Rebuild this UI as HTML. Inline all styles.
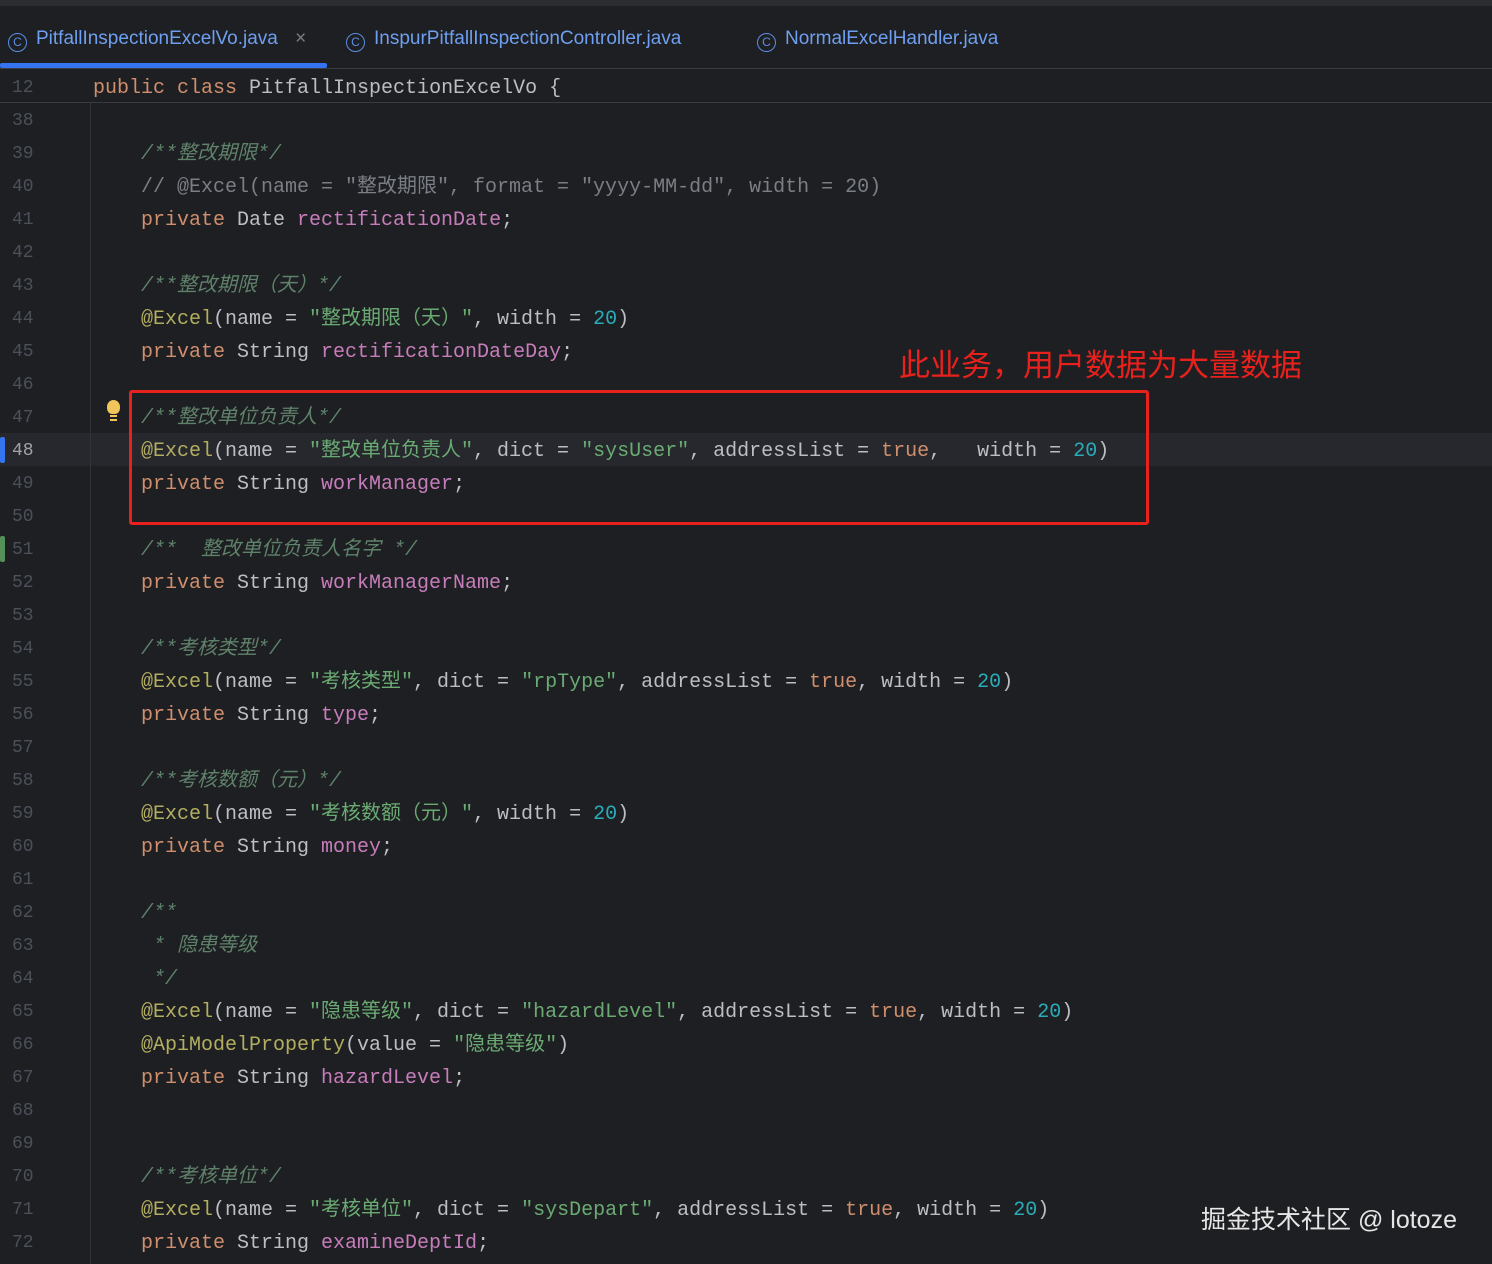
<!DOCTYPE html>
<html><head><meta charset="utf-8"><style>
html,body{margin:0;padding:0;width:1492px;height:1264px;overflow:hidden;background:#1e1f22;}
body{position:relative;font-family:"Liberation Mono","Noto Sans CJK SC",monospace;}
.top{position:absolute;left:0;top:0;width:1492px;height:6px;background:#2b2d30;}
.tabs{position:absolute;left:0;top:6px;width:1492px;height:62px;background:#1e1f22;border-bottom:1px solid #393b40;}
.tab{position:absolute;top:22px;font-family:"Liberation Sans","Noto Sans CJK SC",sans-serif;font-size:19px;color:#6e9ff0;white-space:nowrap;}
.ic{display:inline-block;width:17px;height:17px;border:1.5px solid #5b8ee6;border-radius:50%;font-size:12px;line-height:17px;text-align:center;color:#5b8ee6;vertical-align:-2px;margin-right:9px;}
.uline{position:absolute;left:0;top:63px;width:327px;height:5px;background:#3574f0;border-radius:2px;}
.sticky{position:absolute;left:0;top:69px;width:1492px;height:33px;border-bottom:1px solid #393b40;background:#1e1f22;}
.ln{position:absolute;left:12px;font-size:18px;color:#4b5059;height:33px;line-height:33px;transform:translateY(2px);}
.code{position:absolute;font-size:20px;color:#bcbec4;white-space:pre;height:33px;line-height:33px;transform:translateY(2px);}
.k{color:#cf8e6d}.s{color:#6aab73}.c{color:#5f826b;font-style:italic}.cm{color:#7a7e85}.f{color:#c77dbb}.n{color:#2aacb8}.a{color:#b3ae60}
.cur{position:absolute;left:0;top:433px;width:1492px;height:33px;background:#26282e;}
.gut{position:absolute;left:90px;top:103px;width:1px;height:1161px;background:#313338;}
.box{position:absolute;left:129px;top:390px;width:1014px;height:129px;border:3px solid #e8211d;border-radius:3px;}
.red{position:absolute;left:899px;top:340px;font-family:"Noto Sans CJK SC",sans-serif;font-size:31px;color:#e8211d;white-space:nowrap;}
.wm{position:absolute;left:1201px;top:1200px;font-family:"Liberation Sans","Noto Sans CJK SC",sans-serif;font-size:25px;color:#e6e6e6;white-space:nowrap;}
.mk{position:absolute;left:0;width:5px;height:26px;border-radius:2px;}
</style></head><body>
<div class="top"></div>
<div class="tabs">
<div class="tab" style="left:8px"><span class="ic">C</span>PitfallInspectionExcelVo.java <span style="color:#7a7e85;margin-left:12px">×</span></div>
<div class="tab" style="left:346px"><span class="ic">C</span>InspurPitfallInspectionController.java</div>
<div class="tab" style="left:757px"><span class="ic">C</span>NormalExcelHandler.java</div>
</div>
<div class="uline"></div>
<div class="cur"></div>
<div class="gut"></div>
<div class="sticky"></div>
<div class="ln" style="top:70px">12</div><div class="code" style="left:93px;top:70px"><span class="k">public class</span> PitfallInspectionExcelVo {</div>

<div class="mk" style="top:437px;background:#3574f0"></div>
<div class="mk" style="top:536px;background:#549159"></div>
<div style="position:absolute;left:107px;top:400px;width:13px;height:14px;background:#f2c55c;border-radius:50% 50% 40% 40%"></div>
<div style="position:absolute;left:110px;top:415px;width:7px;height:2px;background:#f2c55c"></div>
<div style="position:absolute;left:110px;top:419px;width:7px;height:2px;background:#f2c55c"></div>

<div class="ln" style="top:103px">38</div>
<div class="ln" style="top:136px">39</div><div class="code" style="left:141px;top:136px"><span class="c">/**整改期限*/</span></div>
<div class="ln" style="top:169px">40</div><div class="code cm" style="left:141px;top:169px">// @Excel(name = "整改期限", format = "yyyy-MM-dd", width = 20)</div>
<div class="ln" style="top:202px">41</div><div class="code" style="left:141px;top:202px"><span class="k">private</span> Date <span class="f">rectificationDate</span>;</div>
<div class="ln" style="top:235px">42</div>
<div class="ln" style="top:268px">43</div><div class="code" style="left:141px;top:268px"><span class="c">/**整改期限（天）*/</span></div>
<div class="ln" style="top:301px">44</div><div class="code" style="left:141px;top:301px"><span class="a">@Excel</span>(name = <span class="s">"整改期限（天）"</span>, width = <span class="n">20</span>)</div>
<div class="ln" style="top:334px">45</div><div class="code" style="left:141px;top:334px"><span class="k">private</span> String <span class="f">rectificationDateDay</span>;</div>
<div class="ln" style="top:367px">46</div>
<div class="ln" style="top:400px">47</div><div class="code" style="left:141px;top:400px"><span class="c">/**整改单位负责人*/</span></div>
<div class="ln" style="top:433px;color:#a1a3ab">48</div><div class="code" style="left:141px;top:433px"><span class="a">@Excel</span>(name = <span class="s">"整改单位负责人"</span>, dict = <span class="s">"sysUser"</span>, addressList = <span class="k">true</span>,   width = <span class="n">20</span>)</div>
<div class="ln" style="top:466px">49</div><div class="code" style="left:141px;top:466px"><span class="k">private</span> String <span class="f">workManager</span>;</div>
<div class="ln" style="top:499px">50</div>
<div class="ln" style="top:532px">51</div><div class="code" style="left:141px;top:532px"><span class="c">/**  整改单位负责人名字 */</span></div>
<div class="ln" style="top:565px">52</div><div class="code" style="left:141px;top:565px"><span class="k">private</span> String <span class="f">workManagerName</span>;</div>
<div class="ln" style="top:598px">53</div>
<div class="ln" style="top:631px">54</div><div class="code" style="left:141px;top:631px"><span class="c">/**考核类型*/</span></div>
<div class="ln" style="top:664px">55</div><div class="code" style="left:141px;top:664px"><span class="a">@Excel</span>(name = <span class="s">"考核类型"</span>, dict = <span class="s">"rpType"</span>, addressList = <span class="k">true</span>, width = <span class="n">20</span>)</div>
<div class="ln" style="top:697px">56</div><div class="code" style="left:141px;top:697px"><span class="k">private</span> String <span class="f">type</span>;</div>
<div class="ln" style="top:730px">57</div>
<div class="ln" style="top:763px">58</div><div class="code" style="left:141px;top:763px"><span class="c">/**考核数额（元）*/</span></div>
<div class="ln" style="top:796px">59</div><div class="code" style="left:141px;top:796px"><span class="a">@Excel</span>(name = <span class="s">"考核数额（元）"</span>, width = <span class="n">20</span>)</div>
<div class="ln" style="top:829px">60</div><div class="code" style="left:141px;top:829px"><span class="k">private</span> String <span class="f">money</span>;</div>
<div class="ln" style="top:862px">61</div>
<div class="ln" style="top:895px">62</div><div class="code" style="left:141px;top:895px"><span class="c">/**</span></div>
<div class="ln" style="top:928px">63</div><div class="code" style="left:141px;top:928px"><span class="c"> * 隐患等级</span></div>
<div class="ln" style="top:961px">64</div><div class="code" style="left:141px;top:961px"><span class="c"> */</span></div>
<div class="ln" style="top:994px">65</div><div class="code" style="left:141px;top:994px"><span class="a">@Excel</span>(name = <span class="s">"隐患等级"</span>, dict = <span class="s">"hazardLevel"</span>, addressList = <span class="k">true</span>, width = <span class="n">20</span>)</div>
<div class="ln" style="top:1027px">66</div><div class="code" style="left:141px;top:1027px"><span class="a">@ApiModelProperty</span>(value = <span class="s">"隐患等级"</span>)</div>
<div class="ln" style="top:1060px">67</div><div class="code" style="left:141px;top:1060px"><span class="k">private</span> String <span class="f">hazardLevel</span>;</div>
<div class="ln" style="top:1093px">68</div>
<div class="ln" style="top:1126px">69</div>
<div class="ln" style="top:1159px">70</div><div class="code" style="left:141px;top:1159px"><span class="c">/**考核单位*/</span></div>
<div class="ln" style="top:1192px">71</div><div class="code" style="left:141px;top:1192px"><span class="a">@Excel</span>(name = <span class="s">"考核单位"</span>, dict = <span class="s">"sysDepart"</span>, addressList = <span class="k">true</span>, width = <span class="n">20</span>)</div>
<div class="ln" style="top:1225px">72</div><div class="code" style="left:141px;top:1225px"><span class="k">private</span> String <span class="f">examineDeptId</span>;</div>

<div class="box"></div>
<div class="red">此业务，用户数据为大量数据</div>
<div class="wm">掘金技术社区 @ lotoze</div>
</body></html>
